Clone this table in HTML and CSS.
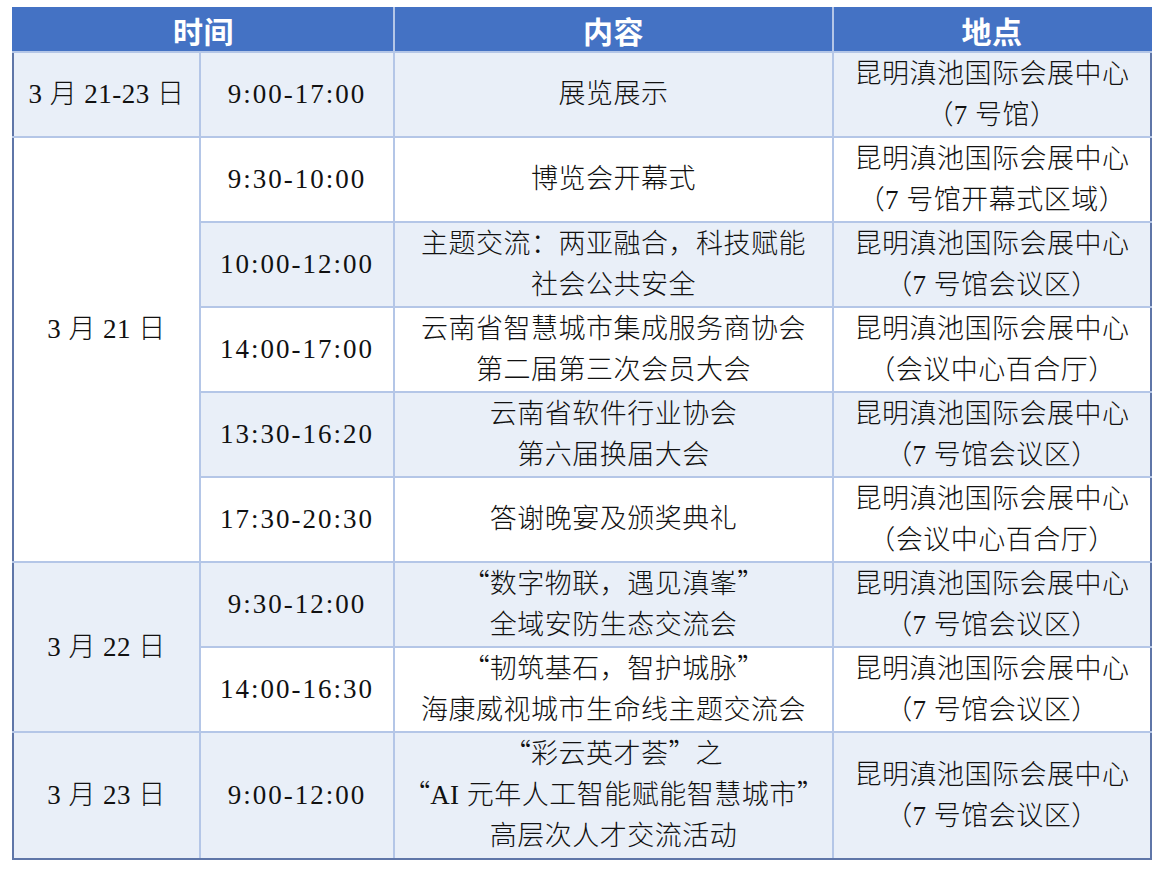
FILE: index.html
```html
<!DOCTYPE html>
<html lang="zh-CN">
<head>
<meta charset="utf-8">
<title>日程安排</title>
<link rel="stylesheet" href="styles.css">
</head>
<body>
<table class="schedule">
  <colgroup>
    <col class="c-date">
    <col class="c-time">
    <col class="c-content">
    <col class="c-place">
  </colgroup>
  <thead>
    <tr class="head">
      <th colspan="2" class="h-first">时间</th>
      <th>内容</th>
      <th class="h-last">地点</th>
    </tr>
  </thead>
  <tbody>
    <tr class="band">
      <td class="date">3 月 21-23 日</td>
      <td class="time">9:00-17:00</td>
      <td>展览展示</td>
      <td class="place">昆明滇池国际会展中心<br>（7 号馆）</td>
    </tr>
    <tr>
      <td class="date raised" rowspan="5">3 月 21 日</td>
      <td class="time">9:30-10:00</td>
      <td>博览会开幕式</td>
      <td class="place">昆明滇池国际会展中心<br>（7 号馆开幕式区域）</td>
    </tr>
    <tr class="band">
      <td class="time">10:00-12:00</td>
      <td>主题交流：两亚融合，科技赋能<br>社会公共安全</td>
      <td class="place">昆明滇池国际会展中心<br>（7 号馆会议区）</td>
    </tr>
    <tr>
      <td class="time">14:00-17:00</td>
      <td>云南省智慧城市集成服务商协会<br>第二届第三次会员大会</td>
      <td class="place">昆明滇池国际会展中心<br>（会议中心百合厅）</td>
    </tr>
    <tr class="band">
      <td class="time">13:30-16:20</td>
      <td>云南省软件行业协会<br>第六届换届大会</td>
      <td class="place">昆明滇池国际会展中心<br>（7 号馆会议区）</td>
    </tr>
    <tr>
      <td class="time">17:30-20:30</td>
      <td>答谢晚宴及颁奖典礼</td>
      <td class="place">昆明滇池国际会展中心<br>（会议中心百合厅）</td>
    </tr>
    <tr class="band">
      <td class="date" rowspan="2">3 月 22 日</td>
      <td class="time">9:30-12:00</td>
      <td><span class="q">“</span>数字物联，遇见滇峯<span class="q">”</span><br>全域安防生态交流会</td>
      <td class="place">昆明滇池国际会展中心<br>（7 号馆会议区）</td>
    </tr>
    <tr>
      <td class="time">14:00-16:30</td>
      <td><span class="q">“</span>韧筑基石，智护城脉<span class="q">”</span><br>海康威视城市生命线主题交流会</td>
      <td class="place">昆明滇池国际会展中心<br>（7 号馆会议区）</td>
    </tr>
    <tr class="band last">
      <td class="date">3 月 23 日</td>
      <td class="time">9:00-12:00</td>
      <td><span class="q">“</span>彩云英才荟<span class="q">”</span>之<br><span class="q">“</span>AI 元年人工智能赋能智慧城市<span class="q">”</span><br>高层次人才交流活动</td>
      <td class="place">昆明滇池国际会展中心<br>（7 号馆会议区）</td>
    </tr>
  </tbody>
</table>
</body>
</html>
```

FILE: styles.css
```css
html, body {
  margin: 0;
  padding: 0;
  background: #ffffff;
}

body {
  padding: 7px 0 0 12px;
}

.schedule {
  border-collapse: collapse;
  table-layout: fixed;
  width: 1138px;
  font-family: "Liberation Serif", "Noto Sans CJK SC", serif;
  font-size: 27px;
  font-weight: 300;
  letter-spacing: 0.5px;
  color: #111111;
}

.c-date { width: 187px; }
.c-time { width: 194px; }
.c-content { width: 439px; }
.c-place { width: 318px; }

.head th {
  height: 43px;
  padding: 0;
  background: #4472c4;
  color: #ffffff;
  font-family: "Noto Sans CJK SC", sans-serif;
  font-weight: 700;
  font-size: 30px;
  line-height: 40px;
  text-align: center;
  vertical-align: middle;
  border-top: 1px solid #4472c4;
  border-left: 2px solid #b4c6e7;
  border-right: 2px solid #b4c6e7;
  border-bottom: 2px solid #b4c6e7;
}

.head th.h-first { border-left: 2px solid #4472c4; }
.head th.h-last { border-right: 2px solid #4472c4; }

.schedule td {
  height: 83px;
  padding: 0;
  text-align: center;
  vertical-align: middle;
  line-height: 41px;
  background: #ffffff;
  border: 2px solid #b4c6e7;
  white-space: nowrap;
}

.schedule td.time {
  letter-spacing: 2px;
}

.schedule td.raised {
  padding-bottom: 41px;
}

.q {
  font-family: "Noto Sans CJK SC", sans-serif;
  font-feature-settings: "fwid" 1;
  letter-spacing: 0;
  line-height: 20px;
}

.schedule tr.band td {
  background: #e9eff8;
}

.schedule td.date {
  border-left: 2px solid #5f76a8;
}

.schedule td.place {
  border-right: 2px solid #5f76a8;
}

.schedule tr.last td {
  height: 125px;
  line-height: 41px;
  border-bottom: 2px solid #5f76a8;
}
```
